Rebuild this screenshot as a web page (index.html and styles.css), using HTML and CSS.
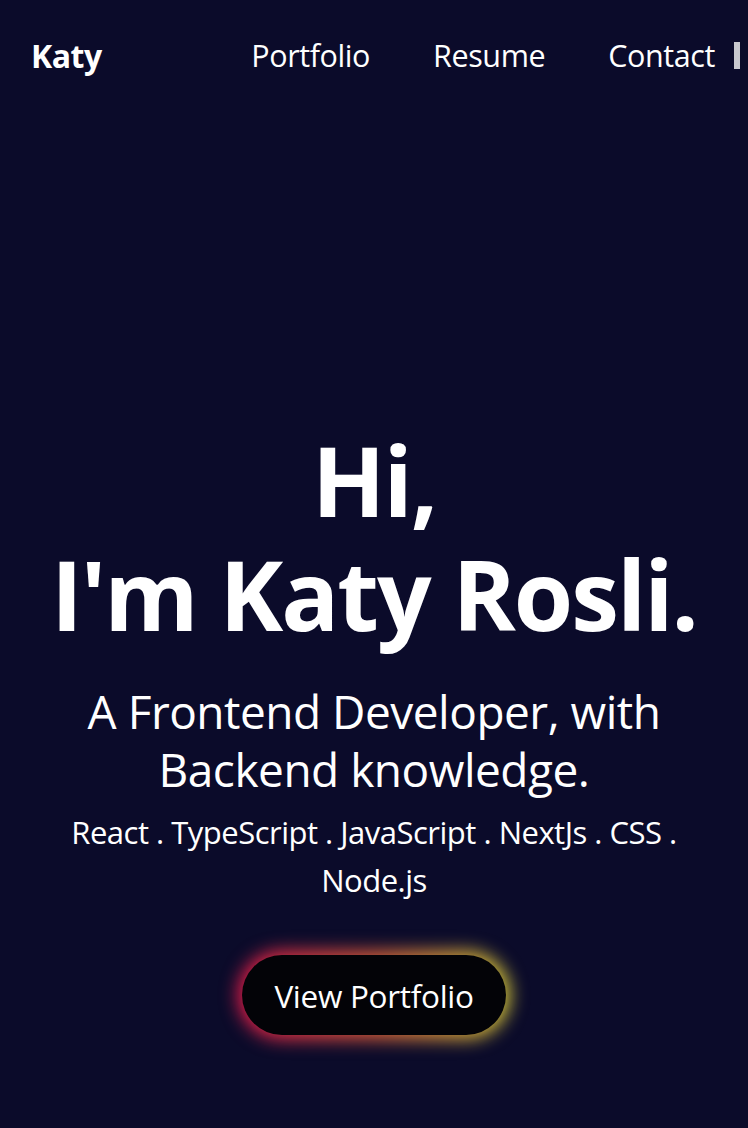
FILE: index.html
```html
<!DOCTYPE html>
<html lang="en">
<head>
<meta charset="utf-8">
<title>Katy Rosli</title>
<link rel="stylesheet" href="styles.css">
</head>
<body>
<header class="header">
  <a class="brand" href="#">Katy</a>
  <nav class="nav">
    <a class="nav-link" href="#">Portfolio</a>
    <a class="nav-link" href="#">Resume</a>
    <a class="nav-link" href="#">Contact</a>
    <span class="nav-bar"></span>
  </nav>
</header>
<main class="hero">
  <h1 class="title">Hi,<br>I'm Katy Rosli.</h1>
  <p class="subtitle">A Frontend Developer, with<br>Backend knowledge.</p>
  <p class="tech">React . TypeScript . JavaScript . NextJs . CSS .<br>Node.js</p>
  <a class="cta" href="#">View Portfolio</a>
</main>
</body>
</html>
```

FILE: styles.css
```css
* { box-sizing: border-box; }
html, body { margin: 0; padding: 0; }
body {
  background: #0b0b2a;
  color: #ffffff;
  font-family: "Open Sans", "Noto Sans", sans-serif;
  width: 748px;
  height: 1128px;
  overflow: hidden;
}
a { color: inherit; text-decoration: none; }
.header {
  display: flex;
  align-items: center;
  justify-content: space-between;
  padding: 34px 8px 0 31px;
  height: 76px;
}
.brand {
  font-weight: 700;
  font-size: 32px;
  letter-spacing: -0.5px;
}
.nav {
  display: flex;
  align-items: center;
  gap: 63px;
}
.nav-link {
  font-size: 30.5px;
  letter-spacing: -0.4px;
}
.nav-bar {
  width: 6px;
  height: 27px;
  background: #c9c9cf;
  margin-left: -44px;
}
.hero {
  display: flex;
  flex-direction: column;
  align-items: center;
  text-align: center;
  padding-top: 347px;
}
.title {
  margin: 0;
  font-size: 96px;
  font-weight: 700;
  line-height: 114px;
  letter-spacing: -2px;
}
.subtitle {
  margin: 31px 0 0;
  font-size: 46px;
  line-height: 58px;
  letter-spacing: -0.5px;
}
.tech {
  margin: 10px 0 0;
  font-size: 31px;
  line-height: 48px;
  letter-spacing: -0.5px;
}
.cta {
  position: relative;
  margin-top: 51px;
  width: 264px;
  height: 80px;
  border-radius: 40px;
  background: #030307;
  display: flex;
  align-items: center;
  justify-content: center;
  font-size: 31.5px;
  letter-spacing: -0.3px;
}
.cta::before {
  content: "";
  position: absolute;
  inset: -4px;
  border-radius: 44px;
  background: linear-gradient(90deg, #e8184a 0%, #e0603a 50%, #d8d038 100%);
  filter: blur(9px);
  z-index: -1;
}
```
